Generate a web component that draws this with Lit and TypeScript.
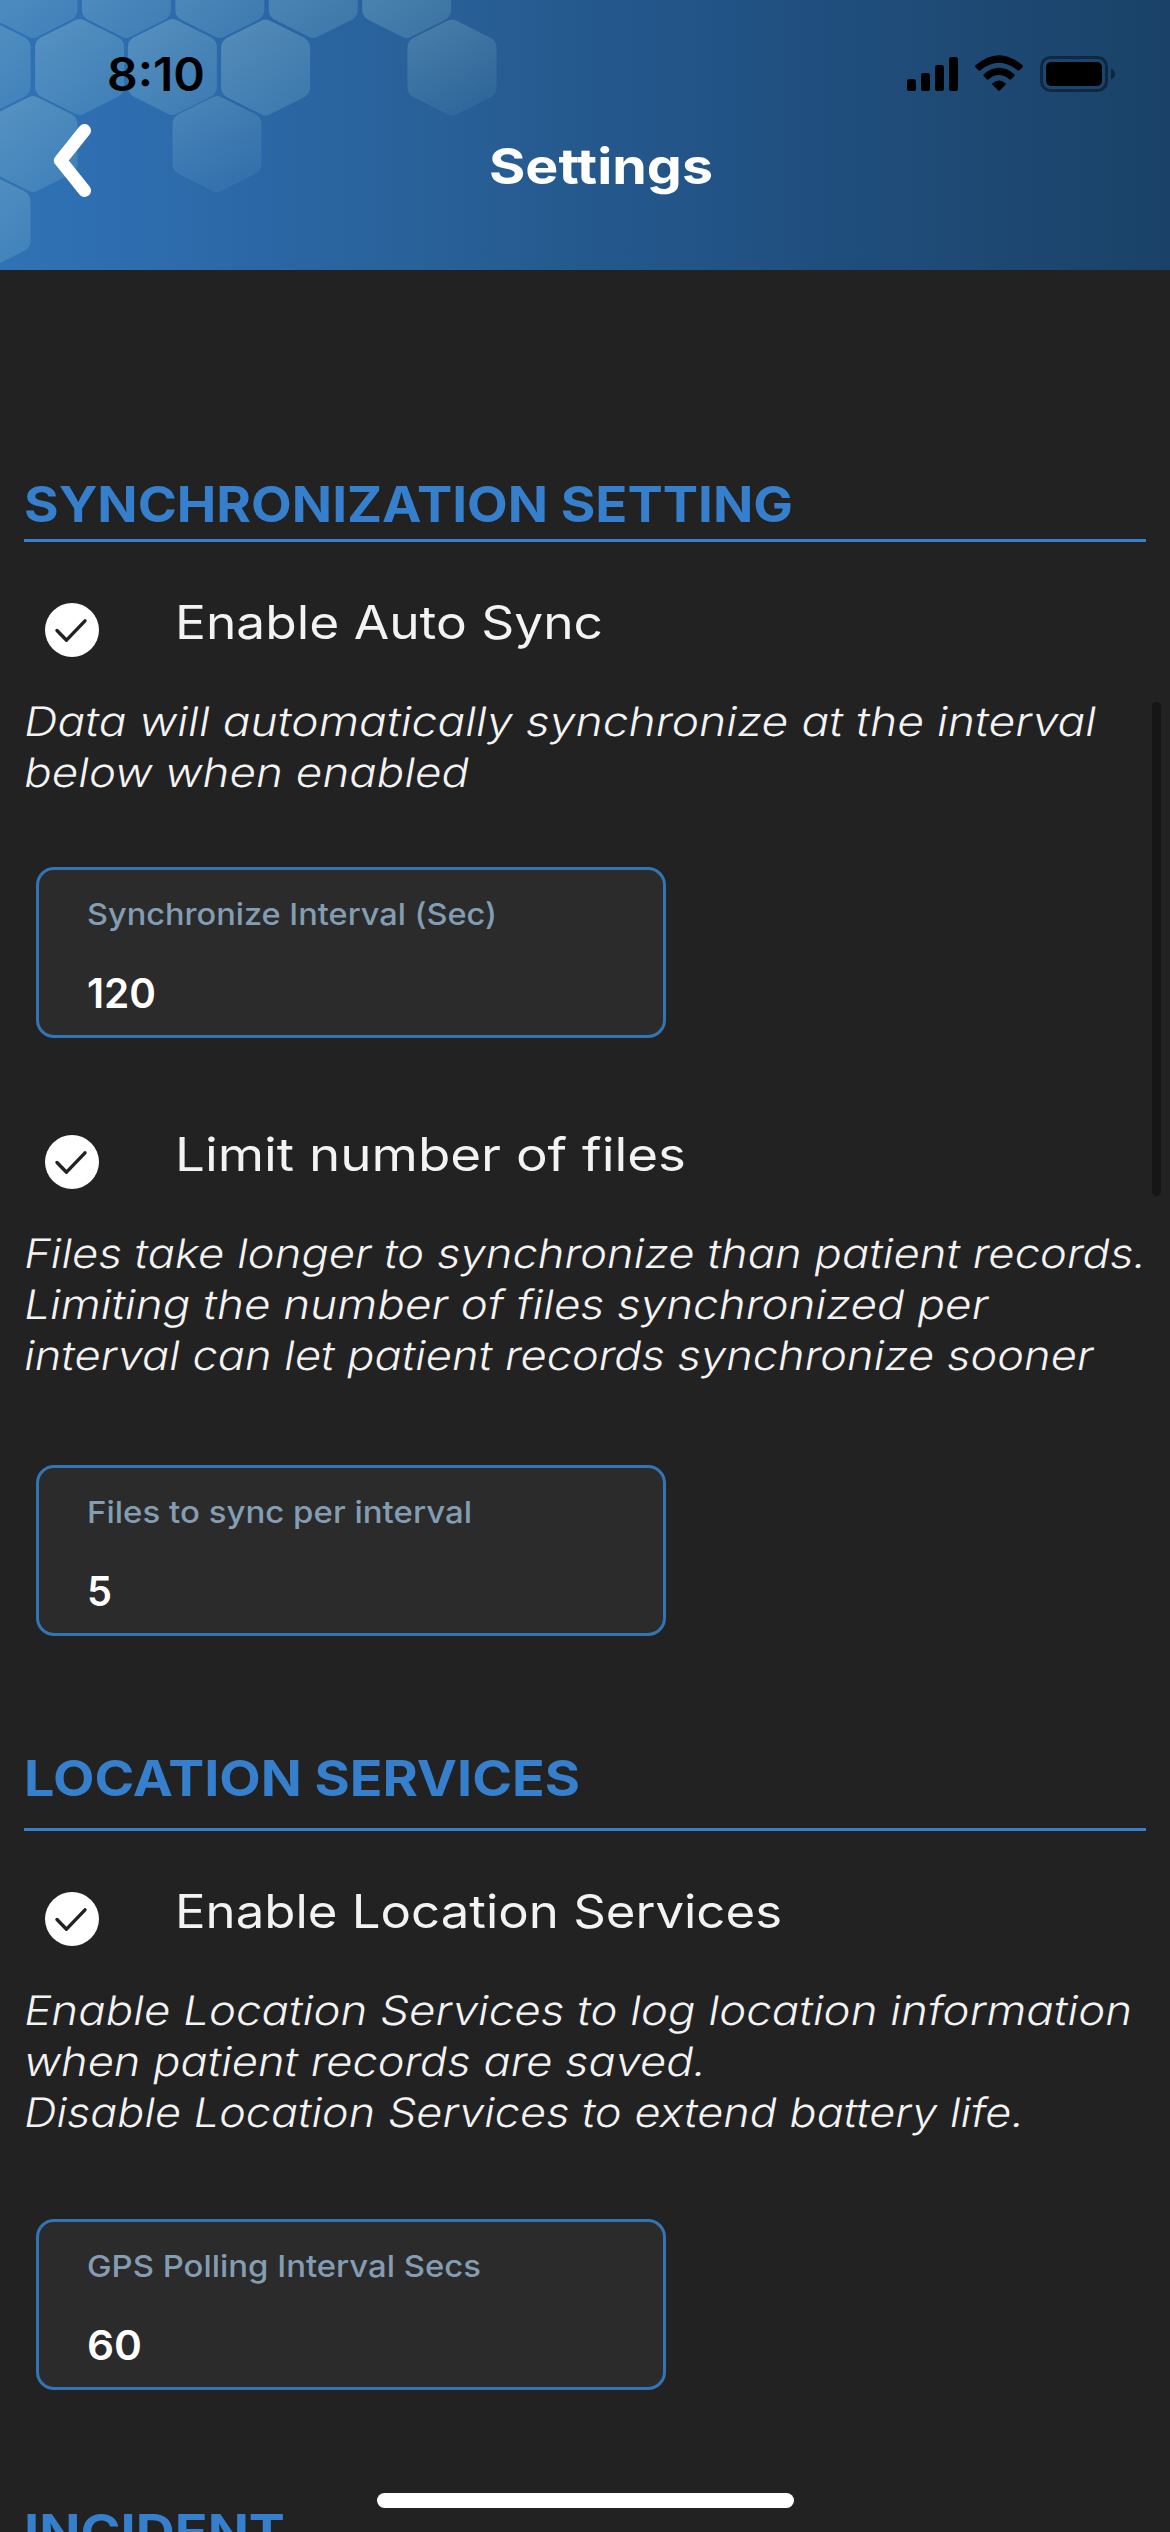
import { LitElement, html, svg, css } from "lit";
import { customElement, property } from "lit/decorators.js";

interface Line {
  text: string;
  width: number;
}

interface Setting {
  label: Line;
  notes: Line[];
  gap: "tight" | "wide" | "mid";
  field: Line;
  value: Line;
}

interface Section {
  title: Line;
  snug: boolean;
  settings: Setting[];
}

const SECTIONS: Section[] = [
  {
    title: { text: "SYNCHRONIZATION SETTING", width: 769 },
    snug: true,
    settings: [
      {
        label: { text: "Enable Auto Sync", width: 428 },
        notes: [
          { text: "Data will automatically synchronize at the interval", width: 1072 },
          { text: "below when enabled", width: 445 },
        ],
        gap: "tight",
        field: { text: "Synchronize Interval (Sec)", width: 410 },
        value: { text: "120", width: 69 },
      },
      {
        label: { text: "Limit number of files", width: 511 },
        notes: [
          { text: "Files take longer to synchronize than patient records.", width: 1122 },
          { text: "Limiting the number of files synchronized per", width: 964 },
          { text: "interval can let patient records synchronize sooner", width: 1069 },
        ],
        gap: "wide",
        field: { text: "Files to sync per interval", width: 385 },
        value: { text: "5", width: 25 },
      },
    ],
  },
  {
    title: { text: "LOCATION SERVICES", width: 556 },
    snug: false,
    settings: [
      {
        label: { text: "Enable Location Services", width: 607 },
        notes: [
          { text: "Enable Location Services to log location information", width: 1108 },
          { text: "when patient records are saved.", width: 682 },
          { text: "Disable Location Services to extend battery life.", width: 1000 },
        ],
        gap: "mid",
        field: { text: "GPS Polling Interval Secs", width: 394 },
        value: { text: "60", width: 55 },
      },
    ],
  },
  { title: { text: "INCIDENT", width: 261 }, snug: false, settings: [] },
];

/** One line of text, stretched horizontally to a set width and optionally slanted. */
@customElement("fitted-line")
export class FittedLine extends LitElement {
  @property() text = "";
  @property({ type: Number }) width = 0;
  @property({ type: Number }) slant = 0;

  static styles = css`
    :host {
      display: block;
      white-space: nowrap;
    }
    .run {
      display: inline-block;
      vertical-align: top;
      transform-origin: 0 80%;
    }
  `;

  updated() {
    const run = this.renderRoot.querySelector<HTMLElement>(".run");
    if (!run) return;
    run.style.transform = "none";
    const natural = run.getBoundingClientRect().width;
    if (natural > 0) {
      run.style.transform = `skewX(${-this.slant}deg) scaleX(${this.width / natural})`;
    }
  }

  render() {
    return html`<span class="run">${this.text}</span>`;
  }
}

const HEXES: [number, number][] = [
  [33, -10], [126.4, -10], [219.8, -10], [313.3, -10], [406.7, -10],
  [-14, 67], [79.6, 67], [172.4, 67], [265.6, 67.5], [452, 67.5],
  [33, 144], [217, 144],
  [-14, 221],
];

@customElement("app-header")
export class AppHeader extends LitElement {
  static styles = css`
    :host {
      display: block;
      position: relative;
      height: 270px;
      overflow: hidden;
      background: linear-gradient(
        90deg,
        #3072b5 0,
        #2e6eb0 110px,
        #2b67a6 260px,
        #29629a 400px,
        #255a8f 560px,
        #225386 720px,
        #1f4d7b 860px,
        #1d4872 1000px,
        #1a4268 1170px
      );
    }
    .pattern {
      position: absolute;
      inset: 0;
      width: 1170px;
      height: 270px;
    }
    .status {
      position: relative;
      display: flex;
      justify-content: space-between;
      height: 100px;
      padding: 0 54px 0 107px;
      box-sizing: border-box;
    }
    .time {
      padding-top: 44px;
      font-size: 46px;
      line-height: 60px;
      font-weight: 600;
      color: #000;
    }
    .icons {
      margin-top: 52px;
      width: 212px;
      height: 44px;
    }
    .bar {
      position: relative;
      display: grid;
      grid-template-columns: 489px 1fr;
      height: 170px;
    }
    .back {
      margin: 22px 0 0 50px;
      width: 46px;
      height: 78px;
    }
    .title {
      padding-top: 37px;
      font-size: 49px;
      line-height: 60px;
      font-weight: 700;
      color: #fff;
    }
  `;

  render() {
    return html`
      <svg class="pattern" viewBox="0 0 1170 270">
        <defs>
          <linearGradient id="shine" x1="0" y1="0" x2="0.65" y2="1">
            <stop offset="0" stop-color="#a5d3dc" stop-opacity="0.35" />
            <stop offset="1" stop-color="#86c3d4" stop-opacity="0.22" />
          </linearGradient>
          <linearGradient id="fade" x1="0" y1="0" x2="0.4" y2="1">
            <stop offset="0" stop-color="#a5d3dc" stop-opacity="0.27" />
            <stop offset="1" stop-color="#86c3d4" stop-opacity="0.1" />
          </linearGradient>
        </defs>
        ${HEXES.map(([x, y]) => {
          const faint = (x > 400 && y > 0) || (x > 200 && y > 100);
          return svg`<path
            transform="translate(${x} ${y})"
            fill=${faint ? "url(#fade)" : "url(#shine)"}
            d="M-5 -46.5Q0 -49.5 5 -46.5L39 -29.500Q44.500 -26 44.500 -20V20Q44.500 26 39 29.500L5 46.500Q0 49.500 -5 46.500L-39 29.500Q-44.500 26 -44.500 20V-20Q-44.500 -26 -39 -29.500Z"
          />`;
        })}
      </svg>
      <div class="status">
        <fitted-line class="time" text="8:10" width="98"></fitted-line>
        <svg class="icons" viewBox="904 52 212 44">
          <rect x="907" y="79" width="9" height="12" rx="2.600" />
          <rect x="921" y="73" width="9" height="18" rx="2.600" />
          <rect x="935" y="65" width="9" height="26" rx="2.600" />
          <rect x="949" y="57" width="9" height="34" rx="2.600" />
          <path d="M975.500 65.300Q999 45 1022.500 65.300Q1023.500 66.300 1022.500 67.300L1019.500 70.300Q1018.600 71 1017.600 70.200Q999 55.200 980.400 70.200Q979.400 71 978.500 70.300L975.500 67.300Q974.500 66.300 975.500 65.300Z" />
          <path d="M983.800 74.200Q999 61.500 1014.200 74.200Q1015.200 75.200 1014.200 76.200L1011.200 79.200Q1010.200 80 1009.200 79.200Q999 71 988.800 79.200Q987.800 80 986.800 79.200L983.800 76.200Q982.800 75.200 983.800 74.200Z" />
          <path d="M992.500 83.200Q999 77.800 1005.500 83.200Q1006.300 84 1005.500 84.800L999.700 90.600Q999 91.200 998.300 90.600L992.500 84.800Q991.700 84 992.500 83.200Z" />
          <rect x="1041.500" y="57.500" width="65" height="33" rx="9" fill="none" stroke="#000" stroke-opacity="0.42" stroke-width="3" />
          <rect x="1046" y="62" width="56" height="24" rx="5" />
          <path d="M1111 68.500Q1115 70.200 1115 74T1111 79.500Z" fill-opacity="0.45" />
        </svg>
      </div>
      <div class="bar">
        <svg class="back" viewBox="50 122 46 78">
          <path d="M84.500 130.500L60.500 160.500L84.500 190.500" fill="none" stroke="#fff" stroke-width="13" stroke-linecap="round" stroke-linejoin="round" />
        </svg>
        <fitted-line class="title" text="Settings" width="224"></fitted-line>
      </div>
    `;
  }
}

@customElement("setting-block")
export class SettingBlock extends LitElement {
  @property({ attribute: false }) setting!: Setting;

  static styles = css`
    :host {
      display: block;
    }
    .row {
      display: flex;
      align-items: flex-start;
      gap: 75.5px;
      height: 54px;
      padding-left: 21px;
    }
    .check {
      flex: none;
      width: 54px;
      height: 54px;
    }
    .label {
      font-size: 46.2px;
      line-height: 39px;
      font-weight: 420;
    }
    .notes {
      margin-left: -2px;
      padding-top: 39px;
      font-size: 40.5px;
      line-height: 51px;
      font-weight: 300;
      font-feature-settings: "cv11";
    }
    .field {
      box-sizing: border-box;
      width: 630px;
      height: 171px;
      margin-left: 12px;
      padding: 24px 0 0 48px;
      border: 3px solid #3175b4;
      border-radius: 18px;
      background: #2b2b2b;
    }
    .field.tight {
      margin-top: 69px;
    }
    .field.mid {
      margin-top: 81px;
    }
    .field.wide {
      margin-top: 84px;
    }
    .caption {
      font-size: 30.5px;
      line-height: 40px;
      font-weight: 500;
      color: #839db2;
    }
    .value {
      margin-top: 35px;
      font-size: 40.5px;
      line-height: 50px;
      font-weight: 560;
      color: #fff;
    }
  `;

  render() {
    const s = this.setting;
    return html`
      <div class="row">
        <svg class="check" viewBox="0 0 54 54">
          <circle cx="27" cy="27" r="27" fill="#fff" />
          <path d="M12 27.500L21.500 37.200L40 17.800" fill="none" stroke="#222" stroke-width="3.400" stroke-linecap="round" stroke-linejoin="round" />
        </svg>
        <fitted-line class="label" .text=${s.label.text} .width=${s.label.width}></fitted-line>
      </div>
      <div class="notes">
        ${s.notes.map((n) => html`<fitted-line .text=${n.text} .width=${n.width} .slant=${10}></fitted-line>`)}
      </div>
      <div class="field ${s.gap}">
        <fitted-line class="caption" .text=${s.field.text} .width=${s.field.width}></fitted-line>
        <fitted-line class="value" .text=${s.value.text} .width=${s.value.width}></fitted-line>
      </div>
    `;
  }
}

@customElement("app-root")
export class AppRoot extends LitElement {
  static styles = css`
    :host {
      display: block;
      position: relative;
      width: 1170px;
      height: 2532px;
      overflow: hidden;
      background: #222;
      color: #f3f3f3;
      font-family: Inter, "Open Sans", sans-serif;
    }
    .content {
      padding: 204px 24px 0;
    }
    .section {
      padding-bottom: 112px;
    }
    .heading {
      padding-bottom: 20px;
      border-bottom: 3px solid #367fcc;
      font-size: 49.3px;
      line-height: 60px;
      font-weight: 700;
      color: #367fcc;
    }
    .heading.snug {
      padding-bottom: 5px;
    }
    .settings {
      display: flex;
      flex-direction: column;
      gap: 97px;
      padding-top: 61px;
    }
    .scroll {
      position: absolute;
      left: 1152px;
      top: 702px;
      width: 9px;
      height: 494px;
      border-radius: 5px;
      background: #161616;
    }
    .home {
      position: absolute;
      left: 377px;
      top: 2493px;
      width: 417px;
      height: 15px;
      border-radius: 8px;
      background: #fff;
    }
  `;

  render() {
    return html`
      <app-header></app-header>
      <main class="content">
        ${SECTIONS.map(
          (sec) => html`
            <section class="section">
              <div class="heading ${sec.snug ? "snug" : ""}">
                <fitted-line .text=${sec.title.text} .width=${sec.title.width}></fitted-line>
              </div>
              <div class="settings">
                ${sec.settings.map((s) => html`<setting-block .setting=${s}></setting-block>`)}
              </div>
            </section>
          `,
        )}
      </main>
      <div class="scroll"></div>
      <div class="home"></div>
    `;
  }
}
